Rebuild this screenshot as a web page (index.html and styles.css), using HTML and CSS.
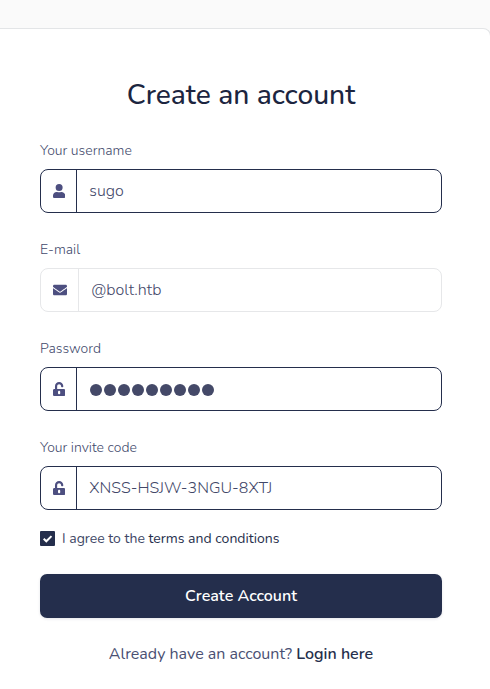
FILE: index.html
```html
<!DOCTYPE html>
<html lang="en">
<head>
<meta charset="utf-8">
<title>Create an account</title>
<link rel="stylesheet" href="styles.css">
</head>
<body>
<svg class="defs" width="0" height="0" aria-hidden="true">
  <symbol id="unlock" viewBox="0 0 448 512"><path fill-rule="evenodd" d="M400 256H152v-104c0-40 32-73 71-74 40 0 73 32 73 72v16c0 13 11 24 24 24h32c13 0 24-11 24-24v-16C376 67 308 0 224 0S72 70 72 153v103H48c-26 0-48 22-48 48v160c0 26 22 48 48 48h352c26 0 48-22 48-48V304c0-26-22-48-48-48zM264 408c0 22-18 40-40 40s-40-18-40-40v-48c0-22 18-40 40-40s40 18 40 40z"/></symbol>
</svg>
<main class="card">
  <h1 class="title">Create an account</h1>
  <form>
    <div class="field">
      <label class="label" for="username">Your username</label>
      <div class="group">
        <span class="addon"><svg class="icon" viewBox="0 0 448 512"><path d="M224 256a128 128 0 1 0 0-256 128 128 0 0 0 0 256zm90 32h-17a174 174 0 0 1-146 0h-17C60 288 0 348 0 422v42c0 26 22 48 48 48h352c26 0 48-22 48-48v-42c0-74-60-134-134-134z"/></svg></span>
        <input class="input" id="username" type="text" value="sugo">
      </div>
    </div>
    <div class="field">
      <label class="label" for="email">E-mail</label>
      <div class="group muted">
        <span class="addon"><svg class="icon envelope" viewBox="0 0 512 512"><path d="M502 191c4-3 10 0 10 5v204c0 26-22 48-48 48H48c-26 0-48-22-48-48V196c0-5 6-8 10-5 22 17 52 39 154 113 21 16 57 48 92 48s72-33 92-48c102-74 132-96 154-113zM256 320c23 0 57-29 73-42 133-96 143-104 174-128 6-5 9-12 9-19v-19c0-26-22-48-48-48H48C22 64 0 86 0 112v19c0 7 3 14 9 19 31 24 41 32 174 128 16 13 50 42 73 42z"/></svg></span>
        <input class="input" id="email" type="text" value="@bolt.htb">
      </div>
    </div>
    <div class="field">
      <label class="label" for="password">Password</label>
      <div class="group">
        <span class="addon"><svg class="icon"><use href="#unlock"/></svg></span>
        <div class="input dots" id="password" role="textbox" aria-label="Password"><i></i><i></i><i></i><i></i><i></i><i></i><i></i><i></i><i></i></div>
      </div>
    </div>
    <div class="field">
      <label class="label" for="invite">Your invite code</label>
      <div class="group">
        <span class="addon"><svg class="icon"><use href="#unlock"/></svg></span>
        <input class="input" id="invite" type="text" value="XNSS-HSJW-3NGU-8XTJ">
      </div>
    </div>
    <div class="check">
      <span class="box"><svg viewBox="0 0 15 15"><path d="M3.7 7.8l2.6 2.5 5.2-5.2"/></svg></span>
      <span class="terms">I agree to the <a>terms and conditions</a></span>
    </div>
    <button class="submit" type="button">Create Account</button>
  </form>
  <p class="footer"><span>Already have an account?</span> <a>Login here</a></p>
</main>
</body>
</html>
```
FILE: styles.css
```css
* { box-sizing: border-box; }
body {
  margin: 0;
  padding-top: 28px;
  background: #fafafa;
  color: #4a5073;
  font-family: Nunito, "Open Sans", sans-serif;
  font-size: 16px;
  font-weight: 300;
}
.defs { display: block; }
.card {
  width: 500px;
  height: 661px;
  margin-left: -9px;
  padding: 48px 48px 0;
  background: #fff;
  border: 1px solid #e3e5e7;
  border-bottom: 0;
  border-radius: 8px 8px 0 0;
}
.title {
  margin: 0 0 24px;
  color: #1c2540;
  font-size: 28.2px;
  font-weight: 500;
  line-height: 36px;
  text-align: center;
}
.field { height: 99px; padding-top: 3px; }
.label {
  display: block;
  height: 29px;
  color: #424a6c;
  font-size: 14px;
  line-height: 21px;
}
.group {
  display: flex;
  height: 44px;
  border: 1px solid #242e4c;
  border-radius: 8px;
}
.addon {
  display: flex;
  align-items: center;
  width: 36px;
  padding-left: 12px;
  border-right: 1px solid #242e4c;
}
.muted, .muted .addon { border-color: #e6e7e9; }
.muted .addon { width: 38px; }
.icon { width: 12.25px; height: 14px; fill: #4d4f80; }
.envelope { width: 14px; }
.input {
  flex: 1;
  min-width: 0;
  margin: 0;
  padding: 0 12px 1px 12.25px;
  border: 0;
  outline: 0;
  background: transparent;
  color: #424768;
  font: inherit;
}
.dots { display: flex; align-items: center; gap: 2px; padding: 2px 0 0 13px; }
.dots i { width: 12px; height: 12px; border-radius: 50%; background: #444968; }
.check { display: flex; align-items: center; height: 22px; margin: -6px 0 25px; font-size: 14px; }
.box { width: 15px; height: 15px; margin-right: 7px; border-radius: 1px; background: #242e4c; }
.box svg { display: block; fill: none; stroke: #fff; stroke-width: 2; }
.terms { color: #414866; font-weight: 400; white-space: nowrap; }
.terms a { color: #262f4c; }
.submit {
  display: block;
  width: 100%;
  height: 44px;
  padding: 0 0 1px;
  border: 0;
  border-radius: 7px;
  background: #242e4c;
  box-shadow: 0 1px 3px rgba(36, 46, 76, .12);
  color: #fff;
  font: inherit;
  font-weight: 600;
}
.footer { margin: 24px 0 0; line-height: 24px; text-align: center; font-weight: 400; white-space: nowrap; }
.footer a { color: #262f4c; font-weight: 600; }
```
